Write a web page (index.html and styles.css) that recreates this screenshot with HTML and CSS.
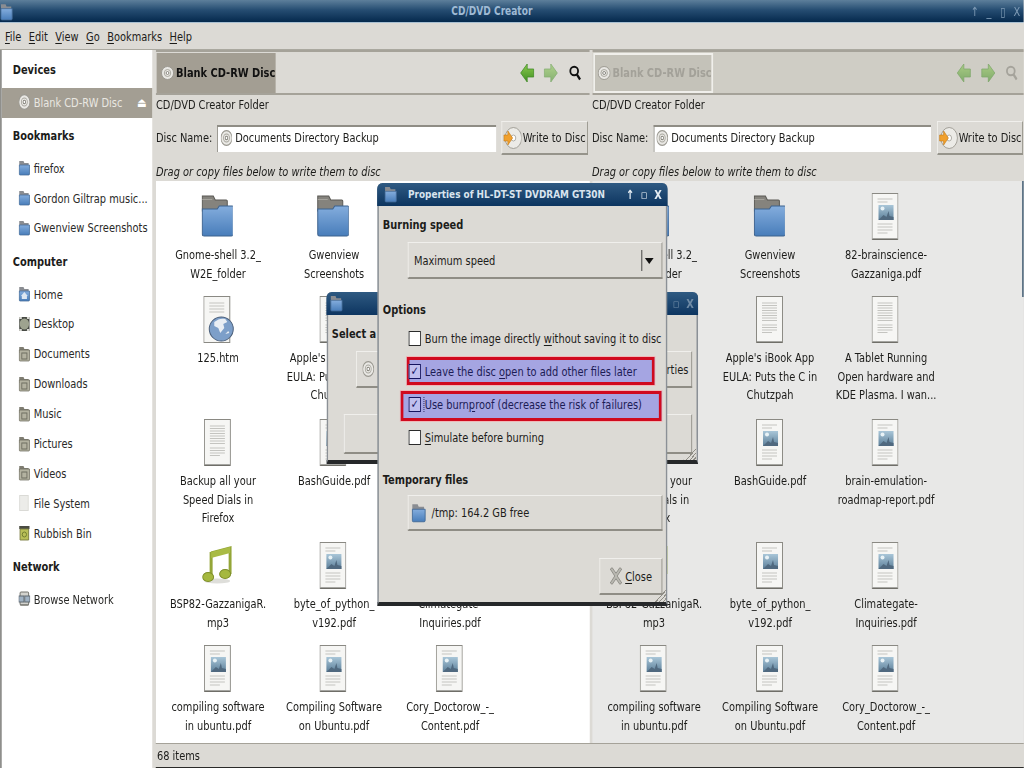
FILE: index.html
```html
<!DOCTYPE html>
<html>
<head>
	<meta charset='utf-8'>
	<title>CD/DVD Creator</title>
	<link rel="stylesheet" href="styles.css">
</head>
<body>

<svg class="defs" width="0" height="0">
	<defs>
		<linearGradient id="blue" x1="0" y1="0" x2="0" y2="1">
			<stop offset="0" stop-color="#84addd"/>
			<stop offset="1" stop-color="#487dba"/>
		</linearGradient>
		<linearGradient id="green" x1="0" y1="0" x2="0" y2="1">
			<stop offset="0" stop-color="#8ccb4e"/>
			<stop offset="1" stop-color="#3f8f22"/>
		</linearGradient>
		<linearGradient id="pic" x1="0" y1="0" x2="0" y2="1">
			<stop offset="0" stop-color="#a9c6d8"/>
			<stop offset="1" stop-color="#5c7f99"/>
		</linearGradient>
		<symbol id="folder-big" viewBox="0 0 32 42" preserveAspectRatio="none">
			<path d="M1 1h11l2 4h11a1 1 0 0 1 1 1v10H1z" fill="#85837d" stroke="#5a5954"/>
			<rect x="1" y="4" width="10" height="1" fill="#a5a39c"/>
			<path d="M1 14h15l2-3h13a1 1 0 0 1 1 1v27a2 2 0 0 1-2 2H3a2 2 0 0 1-2-2z" fill="url(#blue)" stroke="#3d628e"/>
		</symbol>
		<symbol id="doc-text" viewBox="0 0 27 47" preserveAspectRatio="none">
			<rect x="0.5" y="0.5" width="26" height="46" fill="#f6f6f4" stroke="#8a8983"/>
			<path d="M1 46h25" stroke="#55544f"/>
			<path d="M6 7h15M6 9.5h15M6 12h15M6 14.5h15M6 17h15M6 19.500h15M6 22h15M6 24.500h15M6 29h15M6 31.500h15M6 34h15M6 36.500h10" stroke="#c4c4c0" fill="none"/>
		</symbol>
		<symbol id="doc-pdf" viewBox="0 0 27 47" preserveAspectRatio="none">
			<rect x="0.5" y="0.5" width="26" height="46" fill="#f6f6f4" stroke="#8a8983"/>
			<path d="M1 46h25" stroke="#55544f"/>
			<path d="M6 6h15M6 9h10M6 31h15M6 34h15M6 37h15M6 40h10" stroke="#c4c4c0" fill="none"/>
			<rect x="7" y="12" width="15" height="15" fill="url(#pic)"/>
			<circle cx="11" cy="15.500" r="2" fill="#e8f2f6"/>
			<path d="M7 27l5-5 3 2 2-6 1 5 4 1v3z" fill="#50697f"/>
		</symbol>
		<symbol id="doc-web" viewBox="0 0 32 47" preserveAspectRatio="none">
			<rect x="0.5" y="0.5" width="26" height="46" fill="#f6f6f4" stroke="#8a8983"/>
			<path d="M6 7h15M6 10h15M6 13h15M6 16h15" stroke="#c4c4c0" fill="none"/>
			<circle cx="18" cy="33" r="12" fill="#7d9fc9" stroke="#4b5f7a"/>
			<path d="M11 26c4-3 7-4 11-3l2 3-4 2 1 4-4 5-2-5-4-2zM22 38l3-3 1 2z" fill="#e9eef4"/>
		</symbol>
		<symbol id="music" viewBox="0 0 30 38" preserveAspectRatio="none">
			<ellipse cx="15" cy="35" rx="13" ry="2.500" fill="#dededa"/>
			<path d="M9 7l19-5v26" fill="none" stroke="#94a638" stroke-width="3"/>
			<path d="M9 6v25" fill="none" stroke="#94a638" stroke-width="3"/>
			<path d="M9 6l19-5v6L9 12z" fill="#a9bb45"/>
			<ellipse cx="6" cy="31" rx="5.500" ry="4.500" fill="#a5b83f" stroke="#7e8f2a"/>
			<ellipse cx="23" cy="28" rx="5.500" ry="4.500" fill="#a5b83f" stroke="#7e8f2a"/>
		</symbol>
		<symbol id="disc" viewBox="0 0 14 14" preserveAspectRatio="none">
			<circle cx="7" cy="7" r="6.500" fill="#e9e8e4" stroke="#9a9890"/>
			<circle cx="7" cy="7" r="3.500" fill="none" stroke="#a8a69e"/>
			<circle cx="7" cy="7" r="1.500" fill="#fff" stroke="#85837b"/>
		</symbol>
		<symbol id="write-disc" viewBox="0 0 24 24" preserveAspectRatio="none">
			<circle cx="13" cy="12" r="10.500" fill="#ecebe7" stroke="#9a9890"/>
			<circle cx="13" cy="12" r="3" fill="#fff" stroke="#a8a69e"/>
			<path d="M1 9h5V5l6 7-6 7v-4H1z" fill="#f0a02e" stroke="#c67c16" stroke-width="0.700"/>
		</symbol>
		<symbol id="small-folder" viewBox="0 0 14 16" preserveAspectRatio="none">
			<path d="M1 1h5l1 2h5v4H1z" fill="#8a8d92"/>
			<path d="M1 5h12v9a1 1 0 0 1-1 1H2a1 1 0 0 1-1-1z" fill="url(#blue)" stroke="#446b97" stroke-width="0.800"/>
		</symbol>
		<symbol id="home-folder" viewBox="0 0 14 16" preserveAspectRatio="none">
			<path d="M1 1h5l1 2h5v4H1z" fill="#8a8d92"/>
			<path d="M1 5h12v9a1 1 0 0 1-1 1H2a1 1 0 0 1-1-1z" fill="url(#blue)" stroke="#446b97" stroke-width="0.800"/>
			<path d="M7 6l4 4h-1v3H4v-3H3z" fill="#dce7f2"/>
		</symbol>
		<symbol id="user-folder" viewBox="0 0 14 16" preserveAspectRatio="none">
			<path d="M1 1h5l1 2h5v4H1z" fill="#7f7d72"/>
			<path d="M1 4h12v10a1 1 0 0 1-1 1H2a1 1 0 0 1-1-1z" fill="#b3b2a0" stroke="#6d6c5f" stroke-width="0.800"/>
			<rect x="4" y="7" width="6" height="6" fill="none" stroke="#6d6c5f"/>
		</symbol>
		<symbol id="desktop" viewBox="0 0 14 16" preserveAspectRatio="none">
			<rect x="1" y="1" width="12" height="14" fill="#474a44"/>
			<circle cx="7" cy="8" r="5.500" fill="#9ea38f"/>
			<path d="M1 1h3v2H1zM10 1h3v2h-3zM1 13h3v2H1zM10 13h3v2h-3z" fill="#d8d8d2"/>
		</symbol>
		<symbol id="file" viewBox="0 0 14 16" preserveAspectRatio="none">
			<rect x="1.500" y="0.500" width="10" height="15" fill="#ecece9" stroke="#dadad6"/>
		</symbol>
		<symbol id="bin" viewBox="0 0 14 16" preserveAspectRatio="none">
			<rect x="1" y="1" width="12" height="3" fill="#4a4b42"/>
			<path d="M2 4h10v11H2z" fill="#b9bf58" stroke="#7b7d42"/>
			<circle cx="7" cy="9.500" r="2.500" fill="none" stroke="#6e7a2c"/>
		</symbol>
		<symbol id="network" viewBox="0 0 14 16" preserveAspectRatio="none">
			<rect x="2" y="1" width="10" height="13" rx="1" fill="#d3d3ce" stroke="#6b6b65"/>
			<rect x="0.500" y="5" width="6" height="6" fill="#9fb1c2" stroke="#5f6870"/>
			<rect x="7.500" y="5" width="6" height="6" fill="#9fb1c2" stroke="#5f6870"/>
			<path d="M2 14h10" stroke="#6b6b65"/>
		</symbol>
		<symbol id="back" viewBox="0 0 16 20" preserveAspectRatio="none">
			<path d="M1 10l7-9v5h7v8H8v5z" fill="url(#green)" stroke="#3f8a24" stroke-width="0.800"/>
		</symbol>
		<symbol id="forward" viewBox="0 0 16 20" preserveAspectRatio="none">
			<path d="M15 10L8 1v5H1v8h7v5z" fill="url(#green)" stroke="#3f8a24" stroke-width="0.800"/>
		</symbol>
		<symbol id="search" viewBox="0 0 14 16" preserveAspectRatio="none">
			<circle cx="6" cy="6" r="4.300" fill="none" stroke="currentColor" stroke-width="2"/>
			<path d="M9 9.500l3.500 5" fill="none" stroke="currentColor" stroke-width="2.400"/>
		</symbol>
		<symbol id="close-x" viewBox="0 0 22 26" preserveAspectRatio="none">
			<path d="M2 3l3-2 6 8 6-8 3 2-7 10 7 10-3 2-6-8-6 8-3-2 7-10z" fill="#b9b8b1" stroke="#77766f"/>
		</symbol>
	</defs>
</svg>

<div class="frame">
<div class="app">
	<div class="titlebar">
		<svg class="win-icon"><use href="#small-folder"/></svg>
		<span class="title-text">CD/DVD Creator</span>
		<div class="win-buttons">
			<span>↑</span><span>_</span><span>▯</span><span>X</span>
		</div>
	</div>

	<div class="menubar">
		<span><u>F</u>ile</span>
		<span><u>E</u>dit</span>
		<span><u>V</u>iew</span>
		<span><u>G</u>o</span>
		<span><u>B</u>ookmarks</span>
		<span><u>H</u>elp</span>
	</div>

	<div class="main">
		<div class="sidebar">
			<div class="side-head">Devices</div>
			<div class="side-item selected">
				<svg class="side-icon"><use href="#disc"/></svg>Blank CD-RW Disc
				<span class="eject">⏏</span>
			</div>
			<div class="side-head">Bookmarks</div>
			<div class="side-item"><svg class="side-icon"><use href="#small-folder"/></svg>firefox</div>
			<div class="side-item"><svg class="side-icon"><use href="#small-folder"/></svg>Gordon Giltrap music...</div>
			<div class="side-item"><svg class="side-icon"><use href="#small-folder"/></svg>Gwenview Screenshots</div>
			<div class="side-head">Computer</div>
			<div class="side-item"><svg class="side-icon"><use href="#home-folder"/></svg>Home</div>
			<div class="side-item"><svg class="side-icon"><use href="#desktop"/></svg>Desktop</div>
			<div class="side-item"><svg class="side-icon"><use href="#user-folder"/></svg>Documents</div>
			<div class="side-item"><svg class="side-icon"><use href="#user-folder"/></svg>Downloads</div>
			<div class="side-item"><svg class="side-icon"><use href="#user-folder"/></svg>Music</div>
			<div class="side-item"><svg class="side-icon"><use href="#user-folder"/></svg>Pictures</div>
			<div class="side-item"><svg class="side-icon"><use href="#user-folder"/></svg>Videos</div>
			<div class="side-item"><svg class="side-icon"><use href="#file"/></svg>File System</div>
			<div class="side-item"><svg class="side-icon"><use href="#bin"/></svg>Rubbish Bin</div>
			<div class="side-head">Network</div>
			<div class="side-item"><svg class="side-icon"><use href="#network"/></svg>Browse Network</div>
		</div>

		<div class="content">
			<div class="panes">
				<div class="pane">
					<div class="pathbar">
						<div class="path-btn">
							<svg class="path-disc"><use href="#disc"/></svg>Blank CD-RW Disc
						</div>
						<div class="nav">
							<svg class="nav-arrow"><use href="#back"/></svg>
							<svg class="nav-arrow faded"><use href="#forward"/></svg>
							<svg class="nav-search"><use href="#search"/></svg>
						</div>
					</div>
					<div class="folder-label">CD/DVD Creator Folder</div>
					<div class="disc-row">
						<span class="disc-label">Disc Name:</span>
						<div class="entry"><svg class="side-icon"><use href="#disc"/></svg>Documents Directory Backup</div>
						<div class="write-btn"><svg class="write-icon"><use href="#write-disc"/></svg>Write to Disc</div>
					</div>
					<div class="hint">Drag or copy files below to write them to disc</div>
					<div class="files">
						<div class="file-item"><svg class="big folder"><use href="#folder-big"/></svg><div>Gnome-shell 3.2_<br>W2E_folder</div></div>
						<div class="file-item"><svg class="big folder"><use href="#folder-big"/></svg><div>Gwenview<br>Screenshots</div></div>
						<div class="file-item"><svg class="big"><use href="#doc-pdf"/></svg><div>82-brainscience-<br>Gazzaniga.pdf</div></div>
						<div class="file-item"><svg class="big web"><use href="#doc-web"/></svg><div>125.htm</div></div>
						<div class="file-item"><svg class="big"><use href="#doc-text"/></svg><div>Apple's iBook App<br>EULA: Puts the C in<br>Chutzpah</div></div>
						<div class="file-item"><svg class="big"><use href="#doc-text"/></svg><div>A Tablet Running<br>Open hardware and<br>KDE Plasma. I wan...</div></div>
						<div class="file-item"><svg class="big"><use href="#doc-text"/></svg><div>Backup all your<br>Speed Dials in<br>Firefox</div></div>
						<div class="file-item"><svg class="big"><use href="#doc-pdf"/></svg><div>BashGuide.pdf</div></div>
						<div class="file-item"><svg class="big"><use href="#doc-pdf"/></svg><div>brain-emulation-<br>roadmap-report.pdf</div></div>
						<div class="file-item"><svg class="big music"><use href="#music"/></svg><div>BSP82-GazzanigaR.<br>mp3</div></div>
						<div class="file-item"><svg class="big"><use href="#doc-pdf"/></svg><div>byte_of_python_<br>v192.pdf</div></div>
						<div class="file-item"><svg class="big"><use href="#doc-pdf"/></svg><div>Climategate-<br>Inquiries.pdf</div></div>
						<div class="file-item"><svg class="big"><use href="#doc-pdf"/></svg><div>compiling software<br>in ubuntu.pdf</div></div>
						<div class="file-item"><svg class="big"><use href="#doc-pdf"/></svg><div>Compiling Software<br>on Ubuntu.pdf</div></div>
						<div class="file-item"><svg class="big"><use href="#doc-pdf"/></svg><div>Cory_Doctorow_-_<br>Content.pdf</div></div>
					</div>
				</div>

				<div class="pane inactive">
					<div class="pathbar">
						<div class="path-btn">
							<svg class="path-disc"><use href="#disc"/></svg>Blank CD-RW Disc
						</div>
						<div class="nav">
							<svg class="nav-arrow faded"><use href="#back"/></svg>
							<svg class="nav-arrow faded"><use href="#forward"/></svg>
							<svg class="nav-search"><use href="#search"/></svg>
						</div>
					</div>
					<div class="folder-label">CD/DVD Creator Folder</div>
					<div class="disc-row">
						<span class="disc-label">Disc Name:</span>
						<div class="entry"><svg class="side-icon"><use href="#disc"/></svg>Documents Directory Backup</div>
						<div class="write-btn"><svg class="write-icon"><use href="#write-disc"/></svg>Write to Disc</div>
					</div>
					<div class="hint">Drag or copy files below to write them to disc</div>
					<div class="files">
						<div class="file-item"><svg class="big folder"><use href="#folder-big"/></svg><div>Gnome-shell 3.2_<br>W2E_folder</div></div>
						<div class="file-item"><svg class="big folder"><use href="#folder-big"/></svg><div>Gwenview<br>Screenshots</div></div>
						<div class="file-item"><svg class="big"><use href="#doc-pdf"/></svg><div>82-brainscience-<br>Gazzaniga.pdf</div></div>
						<div class="file-item"><svg class="big web"><use href="#doc-web"/></svg><div>125.htm</div></div>
						<div class="file-item"><svg class="big"><use href="#doc-text"/></svg><div>Apple's iBook App<br>EULA: Puts the C in<br>Chutzpah</div></div>
						<div class="file-item"><svg class="big"><use href="#doc-text"/></svg><div>A Tablet Running<br>Open hardware and<br>KDE Plasma. I wan...</div></div>
						<div class="file-item"><svg class="big"><use href="#doc-text"/></svg><div>Backup all your<br>Speed Dials in<br>Firefox</div></div>
						<div class="file-item"><svg class="big"><use href="#doc-pdf"/></svg><div>BashGuide.pdf</div></div>
						<div class="file-item"><svg class="big"><use href="#doc-pdf"/></svg><div>brain-emulation-<br>roadmap-report.pdf</div></div>
						<div class="file-item"><svg class="big music"><use href="#music"/></svg><div>BSP82-GazzanigaR.<br>mp3</div></div>
						<div class="file-item"><svg class="big"><use href="#doc-pdf"/></svg><div>byte_of_python_<br>v192.pdf</div></div>
						<div class="file-item"><svg class="big"><use href="#doc-pdf"/></svg><div>Climategate-<br>Inquiries.pdf</div></div>
						<div class="file-item"><svg class="big"><use href="#doc-pdf"/></svg><div>compiling software<br>in ubuntu.pdf</div></div>
						<div class="file-item"><svg class="big"><use href="#doc-pdf"/></svg><div>Compiling Software<br>on Ubuntu.pdf</div></div>
						<div class="file-item"><svg class="big"><use href="#doc-pdf"/></svg><div>Cory_Doctorow_-_<br>Content.pdf</div></div>
					</div>
					<div class="scroll-thumb"></div>
				</div>
			</div>
			<div class="statusbar">68 items</div>
		</div>
	</div>

	<!-- dialog behind -->
	<div class="dialog select-dialog">
		<div class="dlg-title">
			<svg class="win-icon"><use href="#small-folder"/></svg>
			<div class="dlg-buttons dim"><span>▫</span><span>X</span></div>
		</div>
		<div class="select-body">
			<div class="section-head">Select a disc to write to</div>
			<div class="select-row">
				<div class="gtk-btn select-disc"><svg class="side-icon"><use href="#disc"/></svg></div>
				<div class="gtk-btn select-props">Properties</div>
			</div>
			<div class="gtk-btn select-wide"></div>
		</div>
		<div class="grip"></div>
	</div>

	<!-- properties dialog -->
	<div class="dialog props-dialog">
		<div class="dlg-title">
			<svg class="win-icon"><use href="#small-folder"/></svg>
			<span class="dlg-title-text">Properties of HL-DT-ST DVDRAM GT30N</span>
			<div class="dlg-buttons"><span>↑</span><span>▫</span><span>X</span></div>
		</div>
		<div class="props-body">
			<div class="section-head">Burning speed</div>
			<div class="gtk-btn combo">
				Maximum speed
				<span class="combo-arrow"></span>
			</div>
			<div class="section-head options-head">Options</div>
			<div class="opt"><span class="check"></span><span>Burn the image directly <u>w</u>ithout saving it to disc</span></div>
			<div class="opt on"><span class="mark mark-one"></span><span class="check checked">✓</span><span>Leave the disc <u>o</u>pen to add other files later</span></div>
			<div class="opt on"><span class="mark mark-two"></span><span class="check checked">✓</span><span class="focused">Use burn<u>p</u>roof (decrease the risk of failures)</span></div>
			<div class="opt"><span class="check"></span><span><u>S</u>imulate before burning</span></div>
			<div class="section-head temp-head">Temporary files</div>
			<div class="gtk-btn tmp-btn"><svg class="tmp-icon"><use href="#small-folder"/></svg>/tmp: 164.2 GB free</div>
			<div class="close-row">
				<div class="gtk-btn close-btn"><svg class="close-icon"><use href="#close-x"/></svg><span><u>C</u>lose</span></div>
			</div>
		</div>
		<div class="grip"></div>
	</div>
</div>
</div>

</body>
</html>
```

FILE: styles.css
```css
html, body{
	overflow: hidden;
	height: 100%;
}
body{
	margin: 0;
	font-family: "DejaVu Sans Condensed", "DejaVu Sans", sans-serif;
	font-size: 12.5px;
	color: #1c1c1a;
	background-color: #dcdad5;
}
u{
	text-underline-offset: 2px;
}
.defs{
	position: absolute;
}
.frame{
	width: 1024px;
	height: 768px;
	overflow: hidden;
}

/* the shot is squeezed sideways, so the whole page is laid out wider and scaled */
.app{
	position: relative;
	width: calc(1024px / 0.875);
	height: 768px;
	overflow: hidden;
	display: flex;
	flex-direction: column;
	transform: scaleX(0.875);
	transform-origin: 0 0;
}

/* window frame */
.titlebar{
	height: 23px;
	flex: none;
	display: flex;
	align-items: center;
	justify-content: center;
	position: relative;
	background: linear-gradient(#5d7f9b, #264d72 45%, #05294d);
	border-bottom: 1px solid #a9c0d2;
	box-sizing: border-box;
}
.win-icon{
	position: absolute;
	left: 0;
	top: 3px;
	width: 15px;
	height: 18px;
}
.title-text{
	font-weight: bold;
	font-size: 11.5px;
	color: #9fbad4;
	margin-right: 46px;
}
.win-buttons{
	position: absolute;
	right: 0;
	top: 0;
	height: 22px;
	display: flex;
	align-items: center;
	color: #7f9bb5;
}
.win-buttons span{
	width: 16px;
	text-align: center;
}
.menubar{
	height: 25px;
	flex: none;
	display: flex;
	align-items: center;
	gap: 8.500px;
	padding-left: 5.700px;
	padding-top: 1px;
	border-bottom: 1px solid #aaa89f;
	background-color: #dcdad5;
}

.main{
	flex: 1;
	display: flex;
	min-height: 0;
}

/* places sidebar */
.sidebar{
	width: 173.700px;
	box-sizing: border-box;
	flex: none;
	padding-top: 2px;
	border-left: 2px solid #8f8f8c;
	background-color: #fff;
	margin-right: 4.600px;
}
.side-head{
	height: 36.200px;
	line-height: 36px;
	padding-left: 12.600px;
	font-weight: bold;
}
.side-item{
	height: 29.900px;
	box-sizing: border-box;
	display: flex;
	align-items: center;
	padding: 0 0 2px 19.400px;
	color: #2a2a28;
	white-space: nowrap;
}
.side-item.selected{
	background-color: #a39e93;
	color: #e9e7e1;
	position: relative;
}
.side-icon{
	width: 13.700px;
	height: 16px;
	flex: none;
	margin-right: 3.400px;
}
.eject{
	position: absolute;
	right: 6px;
	font-size: 13px;
	color: #fff;
}

/* file panes */
.content{
	flex: 1;
	display: flex;
	flex-direction: column;
	min-width: 0;
}
.panes{
	flex: 1;
	display: flex;
	gap: 2.300px;
	min-height: 0;
}
.pane{
	flex: 1 1 0;
	display: flex;
	flex-direction: column;
	position: relative;
	overflow: hidden;
	min-width: 0;
}
.pane.inactive{
	flex: 0 0 493.700px;
}
.pathbar{
	height: 45px;
	flex: none;
	box-sizing: border-box;
	display: flex;
	align-items: center;
	justify-content: space-between;
	padding: 0 5.700px 0 1.100px;
	border-top: 2px solid #a5a299;
	border-bottom: 2px solid #a5a299;
}
.inactive .pathbar{
	background-color: #cfcdc5;
}
.path-btn{
	height: 40px;
	width: 136px;
	box-sizing: border-box;
	display: flex;
	align-items: center;
	padding-left: 4.600px;
	gap: 2.300px;
	font-weight: bold;
	white-space: nowrap;
	background-color: #a39e93;
	color: #111;
}
.inactive .path-btn{
	width: 137px;
	background-color: #c4c2b9;
	color: #a3a199;
	border: 2px solid #f0efeb;
	padding-left: 3px;
}
.path-disc{
	width: 14.900px;
	height: 14px;
	flex: none;
}
.nav{
	display: flex;
	align-items: center;
	gap: 10.300px;
	margin-right: 4.600px;
}
.inactive .nav{
	margin-right: 1.200px;
}
.nav-arrow{
	width: 17px;
	height: 20px;
}
.nav-arrow.faded{
	opacity: 0.55;
}
.nav-search{
	width: 14.500px;
	height: 16px;
	color: #111;
	margin-left: 1px;
}
.inactive .nav-search{
	color: #a5a39b;
}
.folder-label{
	height: 19px;
	line-height: 19px;
	margin-bottom: 7px;
}
.disc-row{
	height: 34px;
	flex: none;
	display: flex;
	align-items: center;
	padding-right: 2.300px;
	white-space: nowrap;
}
.inactive .disc-row{
	padding-right: 1.100px;
}
.disc-label{
	margin-bottom: 2px;
}
.entry{
	flex: 1;
	height: 27px;
	margin: 0 5.700px;
	box-sizing: border-box;
	display: flex;
	align-items: center;
	padding: 0 0 3px 2.300px;
	background-color: #fff;
	border-top: 2px solid #8f8d85;
	border-left: 1px solid #8f8d85;
}
.inactive .entry{
	margin-right: 6.900px;
}
.write-btn{
	width: 99.400px;
	height: 34px;
	box-sizing: border-box;
	display: flex;
	align-items: center;
	border: 1px solid #f0efec;
	border-right-color: #96948b;
	border-bottom: 2px solid #96948b;
	padding-left: 1px;
	flex: none;
}
.inactive .write-btn{
	width: 98.300px;
}
.write-icon{
	width: 21.700px;
	height: 24px;
	margin-right: 1px;
	flex: none;
}
.hint{
	height: 26px;
	line-height: 33px;
	font-style: italic;
	flex: none;
}
.files{
	flex: 1;
	background-color: #fff;
	padding: 12px 0 0 4.600px;
	display: grid;
	grid-template-columns: repeat(3, 132.600px);
	grid-template-rows: 103px 123px 123px 103px 103px;
	overflow: hidden;
	text-align: center;
	line-height: 18.700px;
}
.inactive .files{
	background-color: #e8e8e7;
}
.file-item{
	white-space: nowrap;
}
.big{
	display: block;
	width: 30.900px;
	height: 47px;
	margin: 0 auto 6px;
	transform: translateX(-1px);
}
.big.folder{
	width: 36.600px;
	height: 42px;
	margin-top: 2px;
	margin-bottom: 9px;
}
.big.web{
	width: 36.600px;
	transform: translateX(1.300px);
}
.big.music{
	width: 34.300px;
	height: 38px;
	margin-top: 4px;
	margin-bottom: 11px;
}
.scroll-thumb{
	position: absolute;
	right: 0;
	top: 131px;
	width: 2.300px;
	height: 116px;
	background-color: #5e7487;
}
.statusbar{
	height: 25px;
	flex: none;
	line-height: 24px;
	box-sizing: border-box;
	padding-left: 1.100px;
	border-top: 1px solid #a5a299;
	border-bottom: 1px solid #2a2a28;
}

/* dialogs float over the windows */
.dialog{
	position: absolute;
	box-sizing: border-box;
	background-color: #dcdad5;
	border-left: 2px solid #8b9096;
	border-right: 2px solid #8b9096;
	border-bottom: 4px solid #26282a;
	border-radius: 6px 6px 0 0;
}
.select-dialog{
	left: 372.600px;
	top: 292px;
	width: 425.100px;
	height: 172px;
}
.props-dialog{
	left: 430.900px;
	top: 183px;
	width: 332.600px;
	height: 423px;
}
.dlg-title{
	height: 23px;
	margin: 0 -2px;
	position: relative;
	display: flex;
	align-items: center;
	border-radius: 6px 6px 0 0;
	background: linear-gradient(#2f5a82, #0d3560);
}
.dlg-title .win-icon{
	left: 8px;
	top: 3px;
	height: 17px;
}
.select-dialog .dlg-title .win-icon{
	left: 4.600px;
}
.dlg-title-text{
	margin-left: 35.400px;
	font-weight: bold;
	font-size: 11.300px;
	color: #d9e4ee;
	white-space: nowrap;
}
.dlg-buttons{
	position: absolute;
	right: 3.400px;
	top: 0;
	height: 23px;
	display: flex;
	align-items: center;
	color: #e6edf3;
	font-weight: bold;
}
.dlg-buttons span{
	width: 16px;
	text-align: center;
}
.dlg-buttons.dim{
	color: #6f8ba6;
	right: 1.100px;
}
.section-head{
	font-weight: bold;
	height: 19px;
	line-height: 19px;
	white-space: nowrap;
}
.gtk-btn{
	box-sizing: border-box;
	display: flex;
	align-items: center;
	background-color: #dcdad5;
	border: 1px solid #f0efec;
	border-right-color: #8f8d85;
	border-bottom: 2px solid #8f8d85;
	white-space: nowrap;
}

.select-body{
	padding: 9px 4.600px 0;
}
.select-row{
	display: flex;
	margin: 8px 0 26px 27.400px;
	height: 37px;
}
.select-disc{
	width: 171px;
	padding-left: 6.900px;
}
.select-props{
	flex: 1;
	justify-content: flex-end;
	padding-right: 3.400px;
}
.select-wide{
	margin-left: 13.700px;
	height: 40px;
}

.props-body{
	padding: 9px 4.600px 0;
}
.combo{
	margin: 8px 0 0 28.600px;
	height: 37px;
	padding-left: 6px;
	position: relative;
}
.combo-arrow{
	position: absolute;
	right: 2.300px;
	top: 7px;
	width: 19.400px;
	height: 21px;
	border-left: 1px solid #333;
}
.combo-arrow::after{
	content: "";
	position: absolute;
	left: 2.300px;
	top: 8px;
	border-left: 5.100px solid transparent;
	border-right: 5.100px solid transparent;
	border-top: 6px solid #111;
}
.options-head{
	margin-top: 21px;
	margin-bottom: 3px;
}
.opt{
	height: 33px;
	display: flex;
	align-items: center;
	gap: 4.600px;
	padding-left: 29.700px;
	position: relative;
	white-space: nowrap;
}
.opt.on{
	color: #1c1c55;
}
.opt span{
	position: relative;
}
.check{
	width: 13.700px;
	height: 15px;
	box-sizing: border-box;
	flex: none;
	background-color: #fff;
	border: 1px solid #2b2b2b;
	font-size: 12px;
	line-height: 13px;
	text-align: center;
	color: #14145e;
	font-weight: bold;
	overflow: hidden;
}
.check.checked{
	background-color: #c0c0ee;
	border-color: #14145e;
}
.opt .focused{
	border-left: 1px dotted #2a2a60;
	margin-left: -1px;
}
.opt .mark{
	position: absolute;
	box-sizing: border-box;
	background-color: #a5a5e2;
	border: 3px solid #d00a1e;
	box-shadow: 0 0 0 1px #f0b8b8;
}
.mark-one{
	left: 27.400px;
	right: 9.100px;
	top: 2px;
	height: 28px;
}
.mark-two{
	left: 20.600px;
	right: 1.100px;
	top: 3px;
	height: 30px;
}
.temp-head{
	margin-top: 16px;
}
.tmp-btn{
	margin: 6px 0 0 28.600px;
	height: 36px;
	padding-left: 3.400px;
	gap: 5.700px;
}
.tmp-icon{
	width: 17.100px;
	height: 20px;
}
.close-row{
	display: flex;
	justify-content: flex-end;
	margin-top: 27px;
}
.close-btn{
	width: 72px;
	height: 37px;
	padding-left: 10.300px;
	gap: 2.300px;
}
.close-icon{
	width: 16px;
	height: 18px;
}
.grip{
	position: absolute;
	right: 0;
	bottom: 0;
	width: 15px;
	height: 13px;
	background: repeating-linear-gradient(135deg, transparent 0 2px, #8f8d85 2px 3px);
	clip-path: polygon(100% 0, 100% 100%, 0 100%);
}
```
